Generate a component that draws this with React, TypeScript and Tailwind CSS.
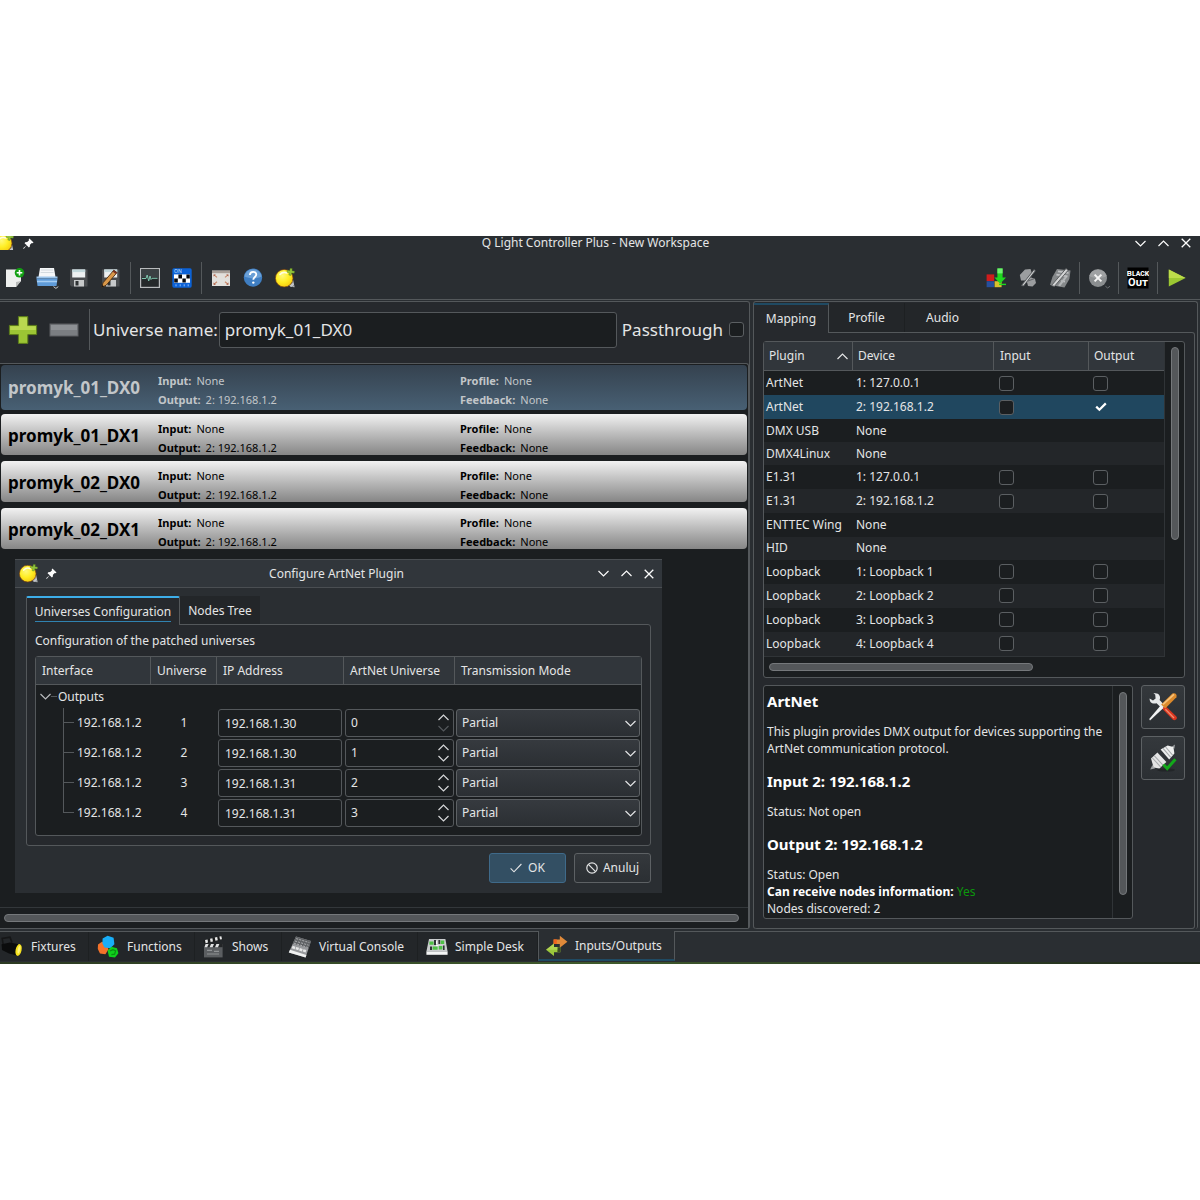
import { useState, type ReactNode } from "react";

type Universe = { name: string; input: string; output: string; profile: string; feedback: string };
type Device = { plugin: string; device: string; patchable: boolean };
type NodeRow = { iface: string; universe: number; ip: string; artnet: number };

const universes: Universe[] = [
  { name: "promyk_01_DX0", input: "None", output: "2: 192.168.1.2", profile: "None", feedback: "None" },
  { name: "promyk_01_DX1", input: "None", output: "2: 192.168.1.2", profile: "None", feedback: "None" },
  { name: "promyk_02_DX0", input: "None", output: "2: 192.168.1.2", profile: "None", feedback: "None" },
  { name: "promyk_02_DX1", input: "None", output: "2: 192.168.1.2", profile: "None", feedback: "None" },
];

const devices: Device[] = [
  { plugin: "ArtNet", device: "1: 127.0.0.1", patchable: true },
  { plugin: "ArtNet", device: "2: 192.168.1.2", patchable: true },
  { plugin: "DMX USB", device: "None", patchable: false },
  { plugin: "DMX4Linux", device: "None", patchable: false },
  { plugin: "E1.31", device: "1: 127.0.0.1", patchable: true },
  { plugin: "E1.31", device: "2: 192.168.1.2", patchable: true },
  { plugin: "ENTTEC Wing", device: "None", patchable: false },
  { plugin: "HID", device: "None", patchable: false },
  { plugin: "Loopback", device: "1: Loopback 1", patchable: true },
  { plugin: "Loopback", device: "2: Loopback 2", patchable: true },
  { plugin: "Loopback", device: "3: Loopback 3", patchable: true },
  { plugin: "Loopback", device: "4: Loopback 4", patchable: true },
];

const nodeRows: NodeRow[] = [
  { iface: "192.168.1.2", universe: 1, ip: "192.168.1.30", artnet: 0 },
  { iface: "192.168.1.2", universe: 2, ip: "192.168.1.30", artnet: 1 },
  { iface: "192.168.1.2", universe: 3, ip: "192.168.1.31", artnet: 2 },
  { iface: "192.168.1.2", universe: 4, ip: "192.168.1.31", artnet: 3 },
];

/* ---------- small glyphs ---------- */

function Chevron({ up = false, className = "" }: { up?: boolean; className?: string }) {
  return (
    <svg viewBox="0 0 11 7" className={`w-[11px] h-[7px] shrink-0 ${className}`} fill="none" stroke="currentColor" strokeWidth="1.2">
      <path d={up ? "M0.5 6 5.5 1 10.5 6" : "M0.5 1 5.5 6 10.5 1"} />
    </svg>
  );
}

function Cross() {
  return (
    <svg viewBox="0 0 10 10" className="size-[10px]" fill="none" stroke="currentColor" strokeWidth="1.3">
      <path d="M0.7 0.7 9.3 9.3M9.3 0.7 0.7 9.3" />
    </svg>
  );
}

function Pin() {
  return (
    <svg viewBox="0 0 12 12" className="size-[11px] shrink-0" fill="#fcfcfc">
      <path d="M7 0.5 11.5 5 10.4 5.8 9.6 5.4 7.6 7.4 7.4 9.6 6.4 10.3 4 7.9 1 11.6 0.3 11.6 0.4 11 4.1 8 1.7 5.6 2.4 4.6 4.6 4.4 6.6 2.4 6.2 1.6Z" />
    </svg>
  );
}

function Tick({ className }: { className: string }) {
  return (
    <svg viewBox="0 0 12 10" className={className} fill="none" stroke="currentColor" strokeWidth="2.2">
      <path d="M1.2 4.6 4.4 7.8 10.8 1.4" />
    </svg>
  );
}

/* ---------- colour icons ---------- */

function BulbIcon({ className = "size-5" }: { className?: string }) {
  return (
    <svg viewBox="0 0 20 20" className={`shrink-0 ${className}`}>
      <defs>
        <radialGradient id="bulb" cx="0.4" cy="0.35" r="0.75">
          <stop offset="0" stopColor="#fff97a" />
          <stop offset="0.5" stopColor="#ffee24" />
          <stop offset="1" stopColor="#f2c40a" />
        </radialGradient>
      </defs>
      <path d="M13 16 18 11.5 19.6 19.2 15.4 18.8Z" fill="#c3c6c9" />
      <path d="M14.6 17.4 18 14.2M17.4 19 19.2 17" stroke="#6a6e72" strokeWidth="0.7" />
      <circle cx="9.2" cy="10.2" r="8.8" fill="url(#bulb)" stroke="#7a3d10" strokeWidth="0.7" />
      <path d="M5 6.4a6 6 0 0 1 7-1.4" fill="none" stroke="#fffde0" strokeWidth="1.6" strokeLinecap="round" />
      <path d="M15 0.6h2.2l-0.2 2.2 2.6 0.4-0.4 2-2.6-0.2-0.6 2.4-2.2-0.4 0.6-2.2-2.4-0.6 0.4-2 2.4 0.4Z" fill="#93c43c" stroke="#4f7a18" strokeWidth="0.4" />
    </svg>
  );
}

function NewIcon() {
  return (
    <svg viewBox="0 0 20 20" className="size-5">
      <path d="M1 1.5h15V13l-5 6H1Z" fill="#eeefee" />
      <path d="M11 19v-5l5-1Z" fill="#b9bbba" />
      <circle cx="14.5" cy="4.8" r="4.8" fill="#12a012" />
      <path d="M14.5 2v5.6M11.7 4.8h5.6" stroke="#fff" strokeWidth="1.6" />
    </svg>
  );
}

function OpenIcon() {
  return (
    <svg viewBox="0 0 24 24" className="size-6">
      <path d="M5 2h14l1.5 9h-17Z" fill="#f5f7f9" />
      <path d="M6 4h12M5.6 6.5h13" stroke="#ccd3d9" strokeWidth="0.8" />
      <path d="M1.5 10.5h21v2h-21Z" fill="#9cc4ea" />
      <path d="M1.5 12.5h21l-1 7.5h-19Z" fill="#5f9bd8" />
      <path d="M2 15.5h20" stroke="#a6cdf2" strokeWidth="1.6" />
      <path d="m18.5 20.6 2.4 1.8 2.4-1.8" fill="none" stroke="#c9cbcc" />
    </svg>
  );
}

function SaveIcon({ pencil = false }: { pencil?: boolean }) {
  return (
    <svg viewBox="0 0 20 20" className="size-5">
      <path d="M1 1.5h17.5v17H2.5L1 17Z" fill="#4a4d50" />
      <path d="M3.2 1.5h13v8h-13Z" fill="#eef1f2" />
      <path d="M3.2 1.5h13v2.6h-13Z" fill="#c3d9dd" />
      <path d="M5 12h10v6.5H5Z" fill="#c7c9ca" />
      <path d="M6.5 13h3v4.5h-3Z" fill="#2f3234" />
      {pencil && (
        <>
          <path d="M12.8 2.2 16 4.6 5.2 17.2 0.8 19.4 2 14.8Z" fill="#d9984a" stroke="#4b2c10" strokeWidth="0.9" />
          <path d="M12.8 2.2 16 4.6 14.8 6 11.6 3.6Z" fill="#7a2f22" />
          <path d="M0.8 19.4 1.4 17 3 18.3Z" fill="#161616" />
        </>
      )}
    </svg>
  );
}

function MonitorIcon() {
  return (
    <svg viewBox="0 0 20 20" className="size-5">
      <rect x="0.6" y="0.6" width="18.8" height="18.8" fill="#25292b" stroke="#b8bbbd" strokeWidth="1.2" />
      <path d="M1.2 1.2h17.6v8.3H1.2Z" fill="#3b4043" />
      <path d="M2 10.5h4l1.2-3.5 1.5 6 1.3-5 1 3.5 1-1.2h5.5" fill="none" stroke="#7fc6ae" strokeWidth="1" />
    </svg>
  );
}

function DipIcon() {
  return (
    <svg viewBox="0 0 20 20" className="size-5">
      <rect x="0.3" y="0.3" width="19.4" height="19.4" rx="1.6" fill="#0c62d6" />
      <text x="2" y="5" fontSize="5" fill="#cfe2fb" fontFamily="Noto Sans, sans-serif">ON</text>
      <path d="M2 6.4h16v8.4H2Z" fill="#fff" />
      <path d="M2.2 10.6h3.6v4H2.2ZM6.4 6.6H10v4H6.4ZM10.4 10.6h3.4v4h-3.4ZM14.4 6.6h3.4v4h-3.4Z" fill="#05070c" />
      <path d="M4 16.3v2M8.2 16.3v2M12.2 16.3v2M16.2 16.3v2" stroke="#8fb9f2" strokeWidth="1" />
    </svg>
  );
}

function FullscreenIcon() {
  return (
    <svg viewBox="0 0 20 20" className="size-5">
      <rect x="1" y="2.6" width="18" height="15.4" fill="#e2e0dc" />
      <path d="M1 2.6h18v2.6H1Z" fill="#a89f98" />
      <path d="M3.6 7.4 6 9.4M16.4 7.4 14 9.4M3.6 15.8 6 13.8M16.4 15.8 14 13.8" stroke="#c98a6c" strokeWidth="1.2" />
      <path d="M2.6 6.4h2.2L2.6 8.6ZM17.4 6.4h-2.2L17.4 8.6ZM2.6 16.8h2.2l-2.2-2.2ZM17.4 16.8h-2.2l2.2-2.2Z" fill="#a2482c" />
    </svg>
  );
}

function HelpIcon() {
  return (
    <svg viewBox="0 0 20 20" className="size-5">
      <circle cx="10" cy="9.6" r="9.2" fill="#3f7ec2" />
      <path d="M1.4 8.6a8.7 8.7 0 0 1 17.2 0c-4 2.4-12 2.4-17.2 0Z" fill="#6a9fd6" />
      <path d="M6.9 7.1c0-4.4 6.4-4.2 6.4-0.6 0 2.4-3 2.6-3 5.3" fill="none" stroke="#fff" strokeWidth="1.8" />
      <circle cx="10.3" cy="14.6" r="1.2" fill="#fff" />
    </svg>
  );
}

function LiveEditIcon() {
  return (
    <svg viewBox="0 0 20 20" className="size-5">
      <path d="M0.6 6.4h7.6v6.6H0.6Z" fill="#d01c1c" />
      <path d="M0.6 13.2h7.6v6H0.6Z" fill="#274f9c" />
      <path d="M8.6 13.2h7v6h-7Z" fill="#d8c02c" />
      <path d="M11.4 0.4h5.2v9H20l-5.8 6.4L8.4 9.4h3Z" fill="#1fd81f" />
      <path d="M11.4 0.4h5.2v5h-5.2Z" fill="#6ff06f" />
      <path d="M13 16.4h7" stroke="#1fd81f" strokeWidth="1.4" />
    </svg>
  );
}

function HandEditIcon() {
  return (
    <svg viewBox="0 0 18 20" className="w-[18px] h-5">
      <path d="M6 1.6 11.5 1 13 5.5 11 9 16 11 17 15 13.5 18.6 9 18 7.6 12.5 2 12.5 0.8 7Z" fill="#9b9d9f" />
      <path d="M8.2 10 12 9.4M9 13l6.5-2.4" stroke="#63666a" />
      <path d="M2.4 17.6 15 1.6l1.4 1.2L4.6 18Z" fill="#c9cbcc" stroke="#4c4f52" strokeWidth="0.9" />
    </svg>
  );
}

function ConsoleEditIcon() {
  return (
    <svg viewBox="0 0 22 20" className="w-[22px] h-5">
      <path d="M8 1 21.5 2.4 20.4 11 15.5 19.4 1 17 3.4 9Z" fill="#85888a" />
      <path d="M9 3.4 19.6 5M7.4 6.6 18.5 8.4M12 13l4 0.6" stroke="#bfc1c3" strokeWidth="1.6" />
      <path d="M2.4 17.6 17 0.6l2.2 1.6L5.4 18.4Z" fill="#d3d4d5" stroke="#505356" strokeWidth="0.9" />
      <path d="M9 17.4 16.5 8l1.5 1.2-6.8 9Z" fill="#b4b6b8" />
    </svg>
  );
}

function StopIcon() {
  return (
    <svg viewBox="0 0 24 22" className="w-6 h-[22px]">
      <circle cx="11" cy="11" r="9" fill="#8b8e90" />
      <path d="M2.4 9a9 9 0 0 1 17.2 0c-4 2.8-13 2.8-17.2 0Z" fill="#9fa1a3" />
      <path d="M7.6 7.6 14.4 14.4M14.4 7.6 7.6 14.4" stroke="#f4f4f4" strokeWidth="2" />
      <path d="m18.4 19.2 2.3 1.8 2.3-1.8" fill="none" stroke="#6c6f72" />
    </svg>
  );
}

function BlackoutIcon() {
  return (
    <svg viewBox="0 0 22 22" className="size-[22px]" fill="#fff" fontFamily="Liberation Sans Narrow, Roboto, sans-serif" fontWeight="700" textAnchor="middle" fontVariant="small-caps">
      <rect x="0.5" y="0.5" width="21" height="21" fill="#000" />
      <text x="11" y="9" fontSize="8">Black</text>
      <text x="11" y="19" fontSize="11">Out</text>
    </svg>
  );
}

function PlayIcon() {
  return (
    <svg viewBox="0 0 20 20" className="size-5">
      <path d="M1.8 1.6 18.6 10 1.8 18.6Z" fill="#9cc832" />
      <path d="M1.8 1.6 18.6 10H1.8Z" fill="#bcdc4a" />
    </svg>
  );
}

function PlusIcon() {
  return (
    <svg viewBox="0 0 30 30" className="size-[30px]">
      <path d="M10.4 1.6h9.4v8.8h8.8v9.2h-8.8v8.8h-9.4v-8.8H1.4v-9.2h9Z" fill="#9cc534" stroke="#5d7d1a" />
      <path d="M11.2 2.4H19v8.8h8.8V15H2.2v-3.8h9Z" fill="#b9d850" />
    </svg>
  );
}

function MinusIcon() {
  return (
    <svg viewBox="0 0 30 30" className="size-[30px]">
      <rect x="1" y="9" width="28" height="12" fill="#7b7e82" stroke="#5c5f63" />
      <path d="M2 10h26v5H2Z" fill="#8d9094" />
    </svg>
  );
}

function ToolsIcon() {
  return (
    <svg viewBox="0 0 30 30" className="size-[30px]">
      <path d="M14 16.5 17 13.4 28.4 24.6c1.6 2.4-1.4 4.6-3.4 3.2Z" fill="#d9351f" />
      <path d="M17.4 17.2 26 26" stroke="#f08a6c" strokeWidth="1.4" />
      <path d="M1.6 6.6 5 8.4 7.6 6.6 7.2 2.4 5.4 1.4c5.4-1.2 7.8 3 6.2 6.6L17 13.8 14 16.6 8.6 11.2C4.4 12.6 1.4 10.4 1.6 6.6Z" fill="#e6e8e9" />
      <path d="M2 28.4 1.2 27 12.6 13.4l2.8 2.6Z" fill="#f2f3f3" />
      <path d="M13.2 12.6 24.4 1.6c3-1.2 5 1.2 4 3.6L17.2 16.4Z" fill="#dc8a2c" />
      <path d="M15 12.4 26 2.4" stroke="#f6c27a" strokeWidth="1.6" />
    </svg>
  );
}

function HotplugIcon() {
  return (
    <svg viewBox="0 0 30 30" className="size-[30px]">
      <ellipse cx="18" cy="27" rx="9" ry="1.6" fill="#17191b" opacity="0.5" />
      <path d="M24 3.4 27 1.6 26.4 5.8Z M4.4 22 2.2 26.4 7 25.4Z" fill="#9a9d9f" />
      <path d="M12.6 6.6 19.6 2.4 25.4 4 26.4 10.4 21.2 16.4Z" fill="#eeefef" />
      <path d="M3 15.4 9.4 9.6 18.4 19 11.4 25.6 5.6 24.4Z" fill="#e4e5e5" />
      <path d="M15 5.4 22.8 14.4M17.6 4 24.6 12.2M6.4 12.8 15 22.2M4.4 15 12.6 23.8" stroke="#a7aaac" strokeWidth="1.1" />
      <path d="M15.4 21.4 19.2 25.6 27.4 16.2" fill="none" stroke="#12a81a" strokeWidth="3" />
    </svg>
  );
}

function FixtureIcon() {
  return (
    <svg viewBox="0 0 22 22" className="size-[22px]">
      <path d="M2.2 9 1.2 2.4 9 1.2 11 6.6" fill="none" stroke="#151617" strokeWidth="1.6" />
      <path d="M0.6 8.2 9 6.4 19 8.6 17.6 20 8 17.4 1 14Z" fill="#0b0c0d" />
      <ellipse cx="17.6" cy="14" rx="3" ry="6" transform="rotate(12 17.6 14)" fill="#f6e21e" />
      <ellipse cx="18" cy="13.6" rx="1.2" ry="4" transform="rotate(12 18 13.6)" fill="#fff47a" />
    </svg>
  );
}

function FunctionIcon() {
  return (
    <svg viewBox="0 0 22 24" className="w-[22px] h-6">
      <path d="M1 9.6 5 6.8l5 1.8 1.4 6-3 4.6-5.4-0.8L0.8 14Z" fill="#f4722a" />
      <path d="M5.6 3.6 10.6 0.8l6 2 0.8 6.4-4 4-6-0.6-2-4.4Z" fill="#18aef8" />
      <path d="m10.6 15.4 3.8-3.6 5.6 1.4 1.4 5-3.4 4.4-6-0.8Z" fill="#0fcf1c" />
      <path d="m13 16 3-1.4 2.6 1.2-1 3.4-3.2 0.4" fill="none" stroke="#0a8f12" strokeWidth="1.2" />
    </svg>
  );
}

function ShowIcon() {
  return (
    <svg viewBox="0 0 22 24" className="w-[22px] h-6">
      <path d="M1.4 5.4 19.8 1l0.8 3.4L2.2 8.6Z" fill="#1a1b1c" />
      <path d="M3 5l2.6-0.6 0.4 3.2-2.4 0.6ZM8 3.8l2.4-0.6 0.6 3.2-2.4 0.6ZM12.8 2.6l2.4-0.6 0.6 3.2-2.4 0.6ZM17.4 1.6l2-0.4 0.6 3-2 0.4Z" fill="#e8e9e9" />
      <path d="M2 9h18.6v13.4H2Z" fill="#5b5e61" />
      <path d="M2 9h18.6v3.2H2Z" fill="#222426" />
      <path d="M3.6 9h3L5.2 12.2H2.4ZM9 9h3l-1.4 3.2H7.6ZM14.4 9h3L16 12.2h-3Z" fill="#dfe0e1" />
      <path d="M5 15.4h5M12 16.4h5M5 19h12" stroke="#8f9294" strokeWidth="1.2" />
    </svg>
  );
}

function ConsoleIcon() {
  return (
    <svg viewBox="0 0 24 24" className="size-6">
      <path d="M8 1.4 23 6 19.4 17 17.6 22.4 0.8 17.4Z" fill="#97999c" />
      <path d="M8 1.4 23 6 20.8 13 4.6 8.4Z" fill="#5f6265" />
      <path d="M8.2 3.6 21.4 7.6M7 6 20.6 10.2M6 8.2 19.8 12.4" stroke="#b4b6b8" strokeWidth="0.9" strokeDasharray="2 1.2" />
      <path d="M4.2 12 18.4 16.4" stroke="#e6e7e7" strokeWidth="2.6" strokeDasharray="3 0.8" />
      <path d="M0.8 17.4 17.6 22.4 18.4 20 2 14.8Z" fill="#f0f1f1" />
    </svg>
  );
}

function DeskIcon() {
  return (
    <svg viewBox="0 0 22 18" className="w-[22px] h-[18px]">
      <path d="M3 1h16.4L21.6 13.4H0.4Z" fill="#c9cccd" />
      <path d="M0.4 13.4h21.2v3.4H0.4Z" fill="#f4f5f5" />
      <path d="M8 2h2v5H8ZM12.4 2h1.8v4h-1.8ZM4 8.6h2V12H4ZM17 7.6h1.6V12H17Z" fill="#303336" />
      <path d="M3.4 3.4h4.2v3.4H3.4ZM6.6 8.6h5v3.2h-5ZM14.6 2.6h3.6v3.4h-3.6ZM12.8 8h3.6v3.6h-3.6Z" fill="#4fc046" />
      <path d="M10 7.6h2.4M10.6 3v3" stroke="#fff" strokeWidth="1" />
    </svg>
  );
}

function InOutIcon() {
  return (
    <svg viewBox="0 0 24 22" className="w-6 h-[22px]">
      <path d="M8.6 4.4h6.2V0.8l7.6 6-7.6 6V9H8.6Z" fill="#e08a3a" />
      <path d="M8.6 4.4h3.2V9H8.6Z" fill="#f0641e" />
      <path d="M15.4 12H9V8.6L1 14.8 9 21v-3.8h6.4Z" fill="#9bc63c" />
      <path d="M12.4 12.2h3v4.8h-3Z" fill="#3c4c22" />
      <path d="M9 8.6 1 14.8h11.4V12H9Z" fill="#c3e060" opacity="0.6" />
    </svg>
  );
}

/* ---------- building blocks ---------- */

function WindowButtons() {
  return (
    <div className="flex items-center justify-end gap-3 text-[#fcfcfc]">
      <button aria-label="Minimize"><Chevron /></button>
      <button aria-label="Maximize"><Chevron up /></button>
      <button aria-label="Close"><Cross /></button>
    </div>
  );
}

function ToolButton({ label, children }: { label: string; children: ReactNode }) {
  return (
    <button aria-label={label} className="w-8 h-8 flex items-center justify-center shrink-0">
      {children}
    </button>
  );
}

function ToolSeparator() {
  return <div className="w-px h-8 mx-[3px] bg-[#54585b]" />;
}

function CheckBox({ label, checked = false }: { label: string; checked?: boolean }) {
  const [on, setOn] = useState(checked);
  return (
    <span className="grid w-[15px] place-items-center">
      <input
        type="checkbox"
        aria-label={label}
        checked={on}
        onChange={() => setOn(!on)}
        className="appearance-none [grid-area:1/1] size-[15px] rounded-[3px] border border-[#5b5f62] bg-[#1b1e20] checked:border-transparent checked:bg-transparent"
      />
      {on && <Tick className="[grid-area:1/1] w-3 h-[10px] text-white pointer-events-none" />}
    </span>
  );
}

function Field({ label, value }: { label: string; value: string }) {
  return (
    <p>
      <b className="mr-[5px]">{label}:</b>
      {value}
    </p>
  );
}

function UniverseRow({ universe, selected, onSelect }: { universe: Universe; selected: boolean; onSelect: () => void }) {
  return (
    <button onClick={onSelect} className={`block w-full h-[47px] px-px text-left ${selected ? "py-px" : "py-[3px]"}`}>
      <div
        className={`grid grid-cols-[150px_302px_1fr] items-center h-full pl-[7px] rounded-[4px] bg-linear-to-b ${
          selected ? "from-[#35424f] to-[#486074] text-[#c2c6c9]" : "from-[#f2f2f2] to-[#868686] text-black"
        }`}
      >
        <span className="text-[17px] font-bold">{universe.name}</span>
        <div className="text-[11px] leading-[19px] pt-[5px]">
          <Field label="Input" value={universe.input} />
          <Field label="Output" value={universe.output} />
        </div>
        <div className="text-[11px] leading-[19px] pt-[5px]">
          <Field label="Profile" value={universe.profile} />
          <Field label="Feedback" value={universe.feedback} />
        </div>
      </div>
    </button>
  );
}

function Spin({ value, label }: { value: number; label: string }) {
  const [n, setN] = useState(value);
  return (
    <div className="flex items-center h-7 pr-1 rounded-[3px] border border-[#54585b] bg-[#1b1e20]">
      <input
        type="text"
        inputMode="numeric"
        aria-label={label}
        value={n}
        onChange={e => setN(Number(e.target.value) || 0)}
        className="flex-1 min-w-0 pl-[5px] outline-none bg-transparent"
      />
      <div className="flex flex-col gap-1">
        <button aria-label="Increase" onClick={() => setN(n + 1)}><Chevron up className="block text-[#d5d6d7]" /></button>
        <button aria-label="Decrease" disabled={n === 0} onClick={() => setN(n - 1)} className="text-[#d5d6d7] disabled:text-[#54585b]"><Chevron className="block" /></button>
      </div>
    </div>
  );
}

function ConfigureDialog() {
  const th = "h-7 pl-[6px] text-left font-normal border-r border-b border-[#54585b] last:border-r-0";
  return (
    <section role="dialog" aria-label="Configure ArtNet Plugin" className="absolute left-[15px] top-[195px] w-[647px] bg-[#2a2e32]">
      <header className="grid grid-cols-[1fr_auto_1fr] items-center h-[29px] pl-1 pr-2 bg-[#31363b] border-t border-b border-[#4a4e52]">
        <div className="flex items-center gap-2">
          <BulbIcon className="size-[19px]" />
          <Pin />
        </div>
        <h2>Configure ArtNet Plugin</h2>
        <WindowButtons />
      </header>

      <div className="px-[11px] pt-2 pb-[10px]">
        <div role="tablist" className="flex h-7 relative">
          <button role="tab" aria-selected className="w-[154px] border-t-2 border-t-[#3daee9] border-x border-x-[#54585b] bg-[#26292d] rounded-t-[2px] -mb-px">
            <span className="inline-block leading-[19px] border-b border-[#3082b0]">Universes Configuration</span>
          </button>
          <button role="tab" aria-selected={false} className="w-20 pt-[2px] bg-[#232629]">Nodes Tree</button>
        </div>
        <div className="px-2 pt-[7px] pb-[9px] border border-[#54585b] rounded-[3px] rounded-tl-none bg-[#26292d]">
          <p className="leading-[18px] mb-[6px]">Configuration of the patched universes</p>
          <div className="border border-[#54585b] rounded-[3px] bg-[#1b1e20] pb-[7px]">
            <table className="w-full table-fixed border-separate border-spacing-0">
              <colgroup>
                <col className="w-[115px]" />
                <col className="w-[66px]" />
                <col className="w-[127px]" />
                <col className="w-[111px]" />
                <col />
              </colgroup>
              <thead className="bg-[#31363b]">
                <tr>
                  <th className={th}>Interface</th>
                  <th className={th}>Universe</th>
                  <th className={th}>IP Address</th>
                  <th className={th}>ArtNet Universe</th>
                  <th className={th}>Transmission Mode</th>
                </tr>
              </thead>
              <tbody>
                <tr>
                  <td colSpan={5} className="h-[23px] pl-1">
                    <div className="flex items-center">
                      <Chevron className="text-[#b9bbbd]" />
                      <span className="w-[6px] h-px bg-[#54585b]" />
                      <span className="pl-px">Outputs</span>
                    </div>
                  </td>
                </tr>
                {nodeRows.map((row, i) => (
                  <tr key={row.universe}>
                    <td className="h-[30px] p-0 pl-[27px]">
                      <div className="flex h-[30px]">
                        <div className="flex flex-col w-[11px]">
                          <div className="h-[15px] border-l border-b border-[#54585b]" />
                          <div className={i < nodeRows.length - 1 ? "flex-1 border-l border-[#54585b]" : "flex-1"} />
                        </div>
                        <span className="pl-[3px] leading-[30px]">{row.iface}</span>
                      </div>
                    </td>
                    <td className="p-0 text-center">{row.universe}</td>
                    <td className="p-0 pl-px pr-[2px]">
                      <input
                        type="text"
                        aria-label={`IP address of universe ${row.universe}`}
                        defaultValue={row.ip}
                        className="block w-full h-7 px-[6px] rounded-[3px] border border-[#54585b] bg-[#1b1e20]"
                      />
                    </td>
                    <td className="p-0 pl-px pr-px">
                      <Spin value={row.artnet} label={`ArtNet universe of universe ${row.universe}`} />
                    </td>
                    <td className="p-0 pl-px pr-px">
                      <div className="grid items-center">
                        <select
                          aria-label={`Transmission mode of universe ${row.universe}`}
                          className="appearance-none [grid-area:1/1] w-full h-7 pl-[5px] rounded-[3px] border border-[#5d6164] bg-linear-to-b from-[#363a3f] to-[#2b2f33]"
                        >
                          <option>Partial</option>
                          <option>Full</option>
                        </select>
                        <Chevron className="[grid-area:1/1] justify-self-end mr-1 text-[#e3e4e5] pointer-events-none" />
                      </div>
                    </td>
                  </tr>
                ))}
              </tbody>
            </table>
          </div>
        </div>

        <div className="flex justify-end gap-2 mt-[7px]">
          <button className="flex items-center justify-center gap-[6px] w-[77px] h-[30px] rounded-[3px] border border-[#3f6a8a] bg-[#334f63]">
            <svg viewBox="0 0 12 10" className="w-3 h-[10px]" fill="none" stroke="currentColor" strokeWidth="1.1">
              <path d="M0.6 5.4 4 8.8 11.4 1" />
            </svg>
            OK
          </button>
          <button className="flex items-center justify-center gap-[5px] w-[77px] h-[30px] rounded-[3px] border border-[#5d6164] bg-linear-to-b from-[#34383c] to-[#2b2f33]">
            <svg viewBox="0 0 12 12" className="size-3" fill="none" stroke="currentColor" strokeWidth="1.2">
              <circle cx="6" cy="6" r="5.2" />
              <path d="M2.4 2.4 9.6 9.6" />
            </svg>
            Anuluj
          </button>
        </div>
      </div>
    </section>
  );
}

function UniversePanel() {
  const [selected, setSelected] = useState(0);
  return (
    <section className="flex flex-col flex-1 min-w-0 border-t border-r border-b border-[#54585b] rounded-r-[3px] bg-[#26292d]">
      <div className="flex items-center h-[61px] pb-[6px] pl-2 pr-[5px] text-[17px]">
        <button aria-label="Add universe"><PlusIcon /></button>
        <button aria-label="Delete universe" className="ml-[11px]"><MinusIcon /></button>
        <div className="w-px h-[41px] ml-[10px] mr-[3px] bg-[#54585b]" />
        <label htmlFor="universe-name" className="whitespace-nowrap">Universe name:</label>
        <input
          id="universe-name"
          type="text"
          defaultValue="promyk_01_DX0"
          className="flex-1 min-w-0 h-9 ml-px mr-[5px] px-[5px] rounded-[3px] border border-[#54585b] bg-[#1b1e20]"
        />
        <span className="whitespace-nowrap mr-[6px]">Passthrough</span>
        <CheckBox label="Passthrough" />
      </div>

      <div className="relative flex-1 flex flex-col border-t border-r border-[#54585b] rounded-tr-[3px] bg-[#1b1e20]">
        <div className="flex-1 border-b border-[#33373a]">
          {universes.map((u, i) => (
            <UniverseRow key={u.name} universe={u} selected={i === selected} onSelect={() => setSelected(i)} />
          ))}
        </div>
        <div className="h-5 pl-1 pr-[9px] flex items-center">
          <div className="w-full h-2 rounded-full border border-[#75787b] bg-[#54575a]" />
        </div>
        <ConfigureDialog />
      </div>
    </section>
  );
}

function MappingPanel() {
  const [selected, setSelected] = useState(1);
  const th = "h-[29px] text-left font-normal border-r border-b border-[#54585b] last:border-r-0";
  return (
    <section className="flex flex-col w-[445px] shrink-0 pt-px pr-[2px] border-t border-x border-[#54585b] rounded-[3px] bg-[#26292d]">
      <div role="tablist" className="flex h-[29px] relative">
        <button role="tab" aria-selected className="w-[75px] border-t-2 border-t-[#1f4a63] border-r border-r-[#54585b] bg-[#26292d] -mb-px">Mapping</button>
        <button role="tab" aria-selected={false} className="w-[76px] border-r border-[#1d2022] bg-[#232629]">Profile</button>
        <button role="tab" aria-selected={false} className="w-[75px] bg-[#232629]">Audio</button>
      </div>

      <div className="flex-1 flex flex-col gap-[7px] pt-2 px-[9px] pb-[9px] border-t border-r border-b border-[#54585b] rounded-[3px] rounded-tl-none">
        <div className="flex border border-[#54585b] rounded-[3px] bg-[#1b1e20]">
          <div className="flex-1 min-w-0 flex flex-col">
            <table className="w-full h-[315px] table-fixed border-separate border-spacing-0 border-r border-b border-[#303437]">
              <colgroup>
                <col className="w-[89px]" />
                <col className="w-[141px]" />
                <col className="w-[95px]" />
                <col />
              </colgroup>
              <thead className="bg-[#31363b]">
                <tr>
                  <th className={`${th} pl-[5px]`}>
                    <div className="flex items-center justify-between pr-1">Plugin<Chevron up /></div>
                  </th>
                  <th className={`${th} pl-[5px]`}>Device</th>
                  <th className={`${th} pl-[6px]`}>Input</th>
                  <th className={`${th} pl-[5px]`}>Output</th>
                </tr>
              </thead>
              <tbody>
                {devices.map((d, i) => (
                  <tr
                    key={`${d.plugin}-${d.device}`}
                    onClick={() => setSelected(i)}
                    className={`${d.patchable ? "h-6" : "h-[23px]"} ${i === selected ? "bg-[#20475f]" : i % 2 ? "bg-[#232629]" : ""}`}
                  >
                    <td className="p-0 pl-[2px] whitespace-nowrap leading-[18px]">{d.plugin}</td>
                    <td className="p-0 pl-[3px] whitespace-nowrap leading-[18px]">{d.device}</td>
                    <td className="p-0 pl-[5px]">{d.patchable && <CheckBox label={`Input ${d.plugin} ${d.device}`} />}</td>
                    <td className="p-0 pl-1">{d.patchable && <CheckBox label={`Output ${d.plugin} ${d.device}`} checked={i === 1} />}</td>
                  </tr>
                ))}
              </tbody>
            </table>
            <div className="h-5 pl-[5px] flex items-center">
              <div className="w-2/3 h-2 rounded-full border border-[#75787b] bg-[#54575a]" />
            </div>
          </div>
          <div className="w-[19px] pt-[5px] flex justify-center">
            <div className="w-2 h-[193px] rounded-full border border-[#75787b] bg-[#54575a]" />
          </div>
        </div>

        <div className="flex items-start gap-2">
          <div className="flex flex-1 min-w-0 h-[234px] border border-[#54585b] rounded-[3px] bg-[#1b1e20] overflow-hidden">
            <article className="flex-1 min-w-0 pl-[3px] pt-[5px] border-r border-[#303437] leading-[17px]">
              <h3 className="text-[15px] leading-5 font-bold text-white">ArtNet</h3>
              <p className="mt-3">This plugin provides DMX output for devices supporting the ArtNet communication protocol.</p>
              <h3 className="mt-[14px] text-[15px] leading-5 font-bold text-white">Input 2: 192.168.1.2</h3>
              <p className="mt-3">Status: Not open</p>
              <h3 className="mt-[14px] text-[15px] leading-5 font-bold text-white">Output 2: 192.168.1.2</h3>
              <p className="mt-3">Status: Open</p>
              <p><b className="text-white">Can receive nodes information:</b> <span className="text-[#0c960c]">Yes</span></p>
              <p>Nodes discovered: 2</p>
            </article>
            <div className="w-[19px] pt-[6px] flex justify-center">
              <div className="w-2 h-[203px] rounded-full border border-[#75787b] bg-[#54575a]" />
            </div>
          </div>
          <div className="flex flex-col gap-[7px]">
            <button aria-label="Configure plugin" className="size-11 flex items-center justify-center rounded-[3px] border border-[#5d6164] bg-linear-to-b from-[#34383c] to-[#2b2f33]"><ToolsIcon /></button>
            <button aria-label="Toggle hotplugging" className="size-11 flex items-center justify-center rounded-[3px] border border-[#5d6164] bg-linear-to-b from-[#34383c] to-[#2b2f33]"><HotplugIcon /></button>
          </div>
        </div>
      </div>
    </section>
  );
}

const views = [
  { label: "Fixtures", icon: <FixtureIcon />, box: "w-[89px] pl-px gap-2" },
  { label: "Functions", icon: <FunctionIcon />, box: "w-[106px] pl-2 gap-2" },
  { label: "Shows", icon: <ShowIcon />, box: "w-[87px] pl-[7px] gap-2" },
  { label: "Virtual Console", icon: <ConsoleIcon />, box: "w-[136px] pl-[6px] gap-[7px]" },
  { label: "Simple Desk", icon: <DeskIcon />, box: "w-[120px] pl-2 gap-[7px]" },
  { label: "Inputs/Outputs", icon: <InOutIcon />, box: "w-[137px] pl-[6px] gap-[6px]" },
];

export default function App() {
  const [view, setView] = useState("Inputs/Outputs");
  return (
    <div className="min-h-screen flex flex-col justify-center bg-white">
      <div className="bg-[#2a2e32] text-[12px] text-[#e4e5e6] font-['Noto_Sans',sans-serif]">
        <header className="grid grid-cols-[1fr_auto_1fr] items-center h-5 pr-[9px] pb-[6px] leading-[14px]">
          <div className="flex items-center gap-[9px] h-[14px] overflow-hidden">
            <BulbIcon className="size-5 -ml-[6px]" />
            <Pin />
          </div>
          <h1>Q Light Controller Plus - New Workspace</h1>
          <WindowButtons />
        </header>

        <div role="toolbar" className="flex items-center h-[43px] -ml-px pr-[7px]">
          <ToolButton label="New"><NewIcon /></ToolButton>
          <ToolButton label="Open"><OpenIcon /></ToolButton>
          <ToolButton label="Save"><SaveIcon /></ToolButton>
          <ToolButton label="Save as"><SaveIcon pencil /></ToolButton>
          <ToolSeparator />
          <ToolButton label="Monitor"><MonitorIcon /></ToolButton>
          <ToolButton label="Address tool"><DipIcon /></ToolButton>
          <ToolSeparator />
          <ToolButton label="Full screen"><FullscreenIcon /></ToolButton>
          <ToolButton label="Help"><HelpIcon /></ToolButton>
          <ToolButton label="About"><BulbIcon /></ToolButton>
          <div className="flex-1" />
          <ToolButton label="Dump DMX values"><LiveEditIcon /></ToolButton>
          <ToolButton label="Live edit function"><HandEditIcon /></ToolButton>
          <ToolButton label="Live edit virtual console"><ConsoleEditIcon /></ToolButton>
          <ToolSeparator />
          <ToolButton label="Stop all functions"><StopIcon /></ToolButton>
          <ToolSeparator />
          <ToolButton label="Blackout"><BlackoutIcon /></ToolButton>
          <ToolSeparator />
          <ToolButton label="Operate"><PlayIcon /></ToolButton>
        </div>

        <main className="flex gap-[3px] pt-px pb-[2px] pr-[2px] border-t border-[#54585b]">
          <UniversePanel />
          <MappingPanel />
        </main>

        <nav role="tablist" className="flex h-[31px] pb-px border-t border-[#54585b]">
          {views.map(v => (
            <button
              key={v.label}
              role="tab"
              aria-selected={view === v.label}
              onClick={() => setView(v.label)}
              className={`flex items-center whitespace-nowrap ${v.box} ${
                view === v.label
                  ? "pt-[2px] bg-[#2a2e32] border-x border-x-[#54585b] border-b-2 border-b-[#1f4a63] -mt-px"
                  : "bg-[#232629] border-r border-[#1d2022]"
              }`}
            >
              {v.icon}
              {v.label}
            </button>
          ))}
        </nav>
        <div className="h-[2px] bg-linear-to-r from-[#2c3a22] via-[#3f5a2c] to-[#202a1c]" />
      </div>
    </div>
  );
}
